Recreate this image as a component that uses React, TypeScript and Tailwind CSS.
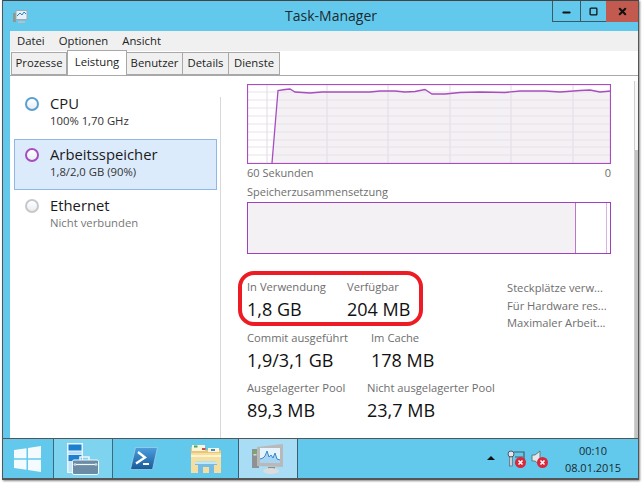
import React from 'react';
import { Minus, Square, X } from 'lucide-react';

const font = "font-['Open_Sans','Noto_Sans',sans-serif]";

const linePoints =
  '272,163 278,90.5 285,89.5 290,89 295,92 310,93 322,92 345,92 370,92 380,91 395,91 405,92 415,91.5 425,89.5 432,94 445,94 460,92.5 480,92 505,92.5 520,91 545,91 560,92 580,90.5 590,90 600,92 611,91';

const Tab = ({ label, w, active }: { label: string; w: string; active?: boolean }) =>
  active ? (
    <div className={`relative z-10 flex h-[25px] items-center justify-center border border-b-0 border-[#a8a8a8] bg-white pb-[2px] text-[11.3px] text-[#222] ${w}`}>
      {label}
    </div>
  ) : (
    <div className={`-ml-px mt-[2px] flex h-[23px] items-center justify-center border border-[#a8a8a8] bg-[#f0f0f0] text-[11.3px] text-[#222] ${w}`}>
      {label}
    </div>
  );

const SideItem = ({
  title,
  sub,
  ring,
  active,
  muted,
}: {
  title: string;
  sub: string;
  ring: string;
  active?: boolean;
  muted?: boolean;
}) => (
  <div
    className={`flex h-[51px] items-start gap-[11px] border pl-[10px] pt-[4px] ${
      active ? 'border-[#8fb8e6] bg-[#dcebfc]' : 'border-transparent'
    }`}
  >
    <div className={`mt-[4px] h-[14px] w-[14px] rounded-full border-2 bg-gradient-to-b from-white to-[#e8eef4] ${ring}`} />
    <div>
      <div className="text-[14.8px] leading-[20px] text-[#1a1a1a]">{title}</div>
      <div className={`text-[11.3px] leading-[16px] ${muted ? 'text-[#777]' : 'text-[#333]'}`}>{sub}</div>
    </div>
  </div>
);

const Stat = ({ label, value, className }: { label: string; value: string; className?: string }) => (
  <div className={className}>
    <div className="whitespace-nowrap text-[11.2px] leading-[16px] text-[#6e6e6e]">{label}</div>
    <div className="whitespace-nowrap text-[18px] leading-[28px] text-[#111]">{value}</div>
  </div>
);

const MemoryChart = () => (
  <svg viewBox="247 84 364 80" className="block h-[80px] w-[364px]">
    <rect x="247" y="84" width="364" height="80" fill="#fff" />
    <polygon points={`${linePoints} 611,163 272,163`} fill="#f3f1f3" />
    {[92, 100, 108, 116, 124, 132, 140, 147, 155].map((y) => (
      <line key={y} x1="247" x2="611" y1={y} y2={y} stroke="#ebe2ec" strokeWidth="1.2" />
    ))}
    {[267, 327, 388, 450, 511, 573].map((x) => (
      <line key={x} x1={x} x2={x} y1="84" y2="163" stroke="#e6dfe7" strokeWidth="1.2" />
    ))}
    <polyline points={linePoints} fill="none" stroke="#a84cc0" strokeWidth="1.3" />
    <rect x="247.5" y="84.5" width="363" height="79" fill="none" stroke="#a84cc0" strokeWidth="1.2" />
  </svg>
);

const WinLogo = () => (
  <svg viewBox="0 0 28 26" className="h-[26px] w-[28px]">
    <polygon points="0,4 12.5,2.3 12.5,12.3 0,12.3" fill="#f4fbfe" />
    <polygon points="14,2 27,0 27,12.3 14,12.3" fill="#f4fbfe" />
    <polygon points="0,13.8 12.5,13.8 12.5,23.7 0,22" fill="#f4fbfe" />
    <polygon points="14,13.8 27,13.8 27,26 14,24" fill="#f4fbfe" />
  </svg>
);

const ServerIcon = () => (
  <svg viewBox="0 0 32 32" className="h-[32px] w-[32px]">
    <rect x="0.5" y="0.5" width="15" height="29" fill="#e8f6fc" stroke="#e8f6fc" />
    <rect x="1.5" y="1.5" width="13" height="6" fill="#1c7fd0" />
    <rect x="1.5" y="8.5" width="13" height="3" fill="#b8dcf4" />
    <rect x="1.5" y="12" width="13" height="6" fill="#1c7fd0" />
    <rect x="1.5" y="18" width="13" height="11" fill="#c6e6f8" />
    <path d="M13 17v-3h9v3" fill="none" stroke="#eef6fa" strokeWidth="1.6" />
    <rect x="5.5" y="17" width="26" height="14.5" rx="1.5" fill="#6c8ca6" stroke="#f0f8fc" />
    <path d="M6 21.5h25" stroke="#92aec2" />
    <path d="M9 21.5h19" stroke="#f0f8fc" strokeWidth="1.2" />
    <path d="M8 20v3M29 20v3" stroke="#f0f8fc" />
  </svg>
);

const PowerShellIcon = () => (
  <svg viewBox="0 0 28 23" className="h-[23px] w-[28px]">
    <defs>
      <linearGradient id="ps" x1="0" y1="0" x2="0" y2="1">
        <stop offset="0" stopColor="#4d9ede" />
        <stop offset="1" stopColor="#175a98" />
      </linearGradient>
    </defs>
    <polygon points="5.5,0.5 27.5,0.5 22.5,22.5 0.5,22.5" fill="url(#ps)" stroke="#a9d4ec" strokeWidth="0.7" />
    <path d="M8 5l7 5.5-9 6" fill="none" stroke="#fff" strokeWidth="2.3" />
    <path d="M13 17h6" stroke="#fff" strokeWidth="2" />
  </svg>
);

const FolderIcon = () => (
  <svg viewBox="0 0 32 30" className="h-[30px] w-[32px]">
    <path d="M1 3h12l2 3h16v23H1z" fill="#e8c878" />
    <rect x="2" y="1" width="13" height="6" fill="#fbf5dc" />
    <rect x="4" y="1.5" width="3.5" height="2" fill="#3fa85a" />
    <rect x="12" y="4" width="3.5" height="2" fill="#d04c3c" />
    <rect x="18" y="4" width="11" height="4" fill="#fbf5dc" />
    <rect x="21" y="5" width="4" height="2" fill="#3c8fd0" />
    <path d="M1 9h30v20H1z" fill="#f5dfa0" />
    <path d="M1 12h30" stroke="#fff4ce" strokeWidth="2" />
    <path d="M5 18c4-1 18-1 22 0v3h-3v8h-5v-6h-6v6H8v-8H5z" fill="#74bce4" />
    <path d="M5 18c4-1 18-1 22 0v2H5z" fill="#c0e8f8" />
  </svg>
);

const TaskMgrIcon = () => (
  <svg viewBox="0 0 32 30" className="h-[30px] w-[32px]">
    <rect x="0" y="5" width="7" height="19" fill="#8f9294" />
    <rect x="1.5" y="7" width="3" height="2" fill="#62c040" />
    <rect x="1.5" y="10" width="3" height="1.5" fill="#d8d8d8" />
    <polygon points="5,3 31,0 31,23 5,22" fill="#b9b9b9" />
    <rect x="8" y="4" width="20" height="15" fill="#e8f4fc" />
    <path d="M8 19v-4l3-1 2-2 2-5 2 6 2-2 2 3 2-5 2 6 3 1v3z" fill="#a8d4f2" />
    <path d="M8 15l3-1 2-2 2-5 2 6 2-2 2 3 2-5 2 6 3 1" fill="none" stroke="#3a88d0" strokeWidth="1" />
    <rect x="16" y="23" width="7" height="3" fill="#8c8c8c" />
    <ellipse cx="19" cy="27" rx="8" ry="3" fill="#dcdcdc" />
  </svg>
);

const ErrorBadge = () => (
  <svg viewBox="0 0 11 11" className="absolute -bottom-[1px] -right-[1px] h-[11px] w-[11px]">
    <circle cx="5.5" cy="5.5" r="5.5" fill="#d8283c" />
    <path d="M3.5 3.5l4 4M7.5 3.5l-4 4" stroke="#fff" strokeWidth="1.6" />
  </svg>
);

const TaskButton = ({ children, w, active, bordered }: { children: React.ReactNode; w: string; active?: boolean; bordered?: boolean }) => (
  <div
    className={`flex h-full items-center justify-center ${w} ${active ? 'border-x border-[#3b5f70] bg-[#a9dcf5]' : ''} ${
      bordered ? 'border-x border-[#3b6a7c] bg-[#7ed3ef]' : ''
    }`}
  >
    {children}
  </div>
);

export default function App() {
  return (
    <div className={`h-[483px] w-[644px] overflow-hidden bg-white pb-[3px] pl-[2px] pr-[5px] ${font}`}>
      <div className="flex h-[480px] flex-col border-x border-b-2 border-t border-x-[#555] border-b-[#555] border-t-[#444] bg-[#62c9ec] shadow-[1px_1px_2px_#888]">
        {/* Title bar */}
        <div className="flex h-[30px] flex-none items-start">
          <svg viewBox="0 0 16 14" className="ml-[9px] mt-[9px] h-[14px] w-[16px]">
            <rect x="1" y="3" width="3" height="9" fill="#8a9a90" />
            <rect x="4" y="0.5" width="11" height="9" fill="#e4f2fb" stroke="#a0a8ae" />
            <path d="M5 6l3-3 2 2 2-3 2 2" fill="none" stroke="#2f7fcf" />
            <rect x="6" y="11" width="7" height="2" fill="#b8bec2" />
          </svg>
          <div className="mt-[3px] flex-1 pl-[82px] text-center text-[14px] leading-[24px] text-[#1c2a30]">Task-Manager</div>
          <div className="flex h-[21px]">
            <div className="flex w-[28px] items-center justify-center border-b border-l border-[#3a5a68]">
              <Minus size={11} strokeWidth={4} className="mt-[3px] text-[#111]" />
            </div>
            <div className="flex w-[26px] items-center justify-center border-b border-l border-[#3a5a68]">
              <Square size={9} strokeWidth={3.4} className="text-[#111]" />
            </div>
            <div className="flex w-[32px] items-center justify-center bg-[#c25a50]">
              <X size={11} strokeWidth={4.5} className="text-[#111]" />
            </div>
          </div>
        </div>

        {/* Window body */}
        <div className="ml-[7px] flex min-h-0 flex-1 flex-col bg-white text-[#222]">
          <div className="flex h-[20px] flex-none items-center gap-[14px] bg-[#f0f0f0] pl-[7px] text-[11.3px]">
            <span>Datei</span>
            <span>Optionen</span>
            <span>Ansicht</span>
          </div>
          <div className="flex h-[25px] flex-none items-end border-b border-[#a8a8a8] pl-[2px]">
            <Tab label="Prozesse" w="w-[56px]" />
            <Tab label="Leistung" w="w-[60px]" active />
            <Tab label="Benutzer" w="w-[57px]" />
            <Tab label="Details" w="w-[47px]" />
            <Tab label="Dienste" w="w-[52px]" />
          </div>

          <div className="flex min-h-0 flex-1">
            {/* Left list */}
            <div className="w-[210px] flex-none pl-[4px] pr-[3px] pt-[12px]">
              <SideItem title="CPU" sub="100%  1,70 GHz" ring="border-[#5a9fd0]" />
              <SideItem title="Arbeitsspeicher" sub="1,8/2,0 GB (90%)" ring="border-[#a64dbf]" active />
              <SideItem title="Ethernet" sub="Nicht verbunden" ring="border-[#c8c8c8]" muted />
            </div>

            {/* Detail */}
            <div className="mt-[21px] flex-1 border-l border-[#d8d8d8] pl-[26px] pt-0">
              <div className="-mt-[13px] w-[364px]">
                <MemoryChart />
                <div className="flex justify-between pt-px text-[11px] leading-[16px] text-[#6e6e6e]">
                  <span>60 Sekunden</span>
                  <span>0</span>
                </div>
                <div className="mt-[3px] text-[11px] leading-[16px] text-[#6e6e6e]">Speicherzusammensetzung</div>
                <div className="mt-[2px] flex h-[52px] border border-[#a040bc]">
                  <div className="w-[328px] border-r border-[#b878c8] bg-[#f3f1f3]" />
                  <div className="flex-1 border-r border-[#d8b4e0]" />
                  <div className="w-[3px]" />
                </div>
              </div>

              <div className="relative mt-[25px] flex w-[364px] justify-between">
                {/* Red annotation around the first stat row */}
                <div className="pointer-events-none absolute -left-[9px] -top-[8px] h-[55px] w-[185px] rounded-[16px] border-[4px] border-[#ed1c24]" />
                <div>
                  <div className="mb-[7px] flex">
                    <Stat label="In Verwendung" value="1,8 GB" className="w-[100px]" />
                    <Stat label="Verfügbar" value="204 MB" />
                  </div>
                  <div className="mb-[6px] flex">
                    <Stat label="Commit ausgeführt" value="1,9/3,1 GB" className="w-[124px]" />
                    <Stat label="Im Cache" value="178 MB" />
                  </div>
                  <div className="flex">
                    <Stat label="Ausgelagerter Pool" value="89,3 MB" className="w-[120px]" />
                    <Stat label="Nicht ausgelagerter Pool" value="23,7 MB" />
                  </div>
                </div>
                <div className="w-[104px] pt-0 text-[11.2px] leading-[17.5px] text-[#6e6e6e]">
                  <div>Steckplätze verw...</div>
                  <div>Für Hardware res...</div>
                  <div>Maximaler Arbeit...</div>
                </div>
              </div>
            </div>

            {/* Scrollbar */}
            <div className="ml-auto mt-[5px] flex w-[4px] flex-none flex-col border-l border-[#cfcfcf]">
              <div className="h-[69px] bg-[#f8f8f8]" />
              <div className="flex-1 bg-[#c4c4c4]" />
            </div>
          </div>
        </div>

        {/* Taskbar */}
        <div className="flex h-[40px] flex-none items-stretch border-t border-[#555]">
          <TaskButton w="w-[50px]">
            <WinLogo />
          </TaskButton>
          <TaskButton w="w-[60px]" bordered>
            <ServerIcon />
          </TaskButton>
          <TaskButton w="w-[61px]">
            <PowerShellIcon />
          </TaskButton>
          <TaskButton w="w-[64px]">
            <FolderIcon />
          </TaskButton>
          <TaskButton w="w-[60px]" active>
            <TaskMgrIcon />
          </TaskButton>
          <div className="ml-auto flex items-center">
            <div className="mr-[12px] mt-[-2px] h-0 w-0 border-x-[4px] border-b-[4px] border-x-transparent border-b-[#111]" />
            <div className="relative mr-[6px] h-[17px] w-[18px]">
              <svg viewBox="0 0 18 17" className="h-[17px] w-[18px]">
                <circle cx="4" cy="4" r="3" fill="#dfe8ee" stroke="#556" />
                <rect x="2.5" y="7" width="3" height="9" fill="#c8d0d6" stroke="#556" strokeWidth="0.6" />
                <path d="M7 2h10v11H8" fill="none" stroke="#4a5a64" strokeWidth="1.2" />
                <path d="M8 7h8" stroke="#4a5a64" />
              </svg>
              <ErrorBadge />
            </div>
            <div className="relative mr-[18px] h-[17px] w-[16px]">
              <svg viewBox="0 0 16 17" className="h-[17px] w-[16px]">
                <path d="M1 5h3l5-4v14l-5-4H1z" fill="#e4e8ea" stroke="#67767e" />
              </svg>
              <ErrorBadge />
            </div>
            <div className="mr-[17px] text-center text-[11px] leading-[17px] text-[#1c2a30]">
              <div>00:10</div>
              <div>08.01.2015</div>
            </div>
          </div>
        </div>
      </div>
    </div>
  );
}
